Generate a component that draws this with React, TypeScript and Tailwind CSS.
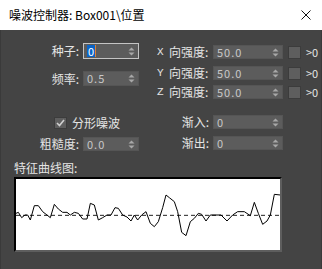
import React from "react";

const font = { fontFamily: '"Noto Sans CJK SC", "Liberation Sans", sans-serif' };

// curve points, in a 3x grid of the graph box
const curve =
  "45,175 52,172 62,188 72,180 80,180 88,195 100,152 112,152 125,170 148,188 160,148 172,162 185,172 198,172 208,180 220,172 232,175 245,192 258,192 268,145 280,150 292,195 305,188 318,180 330,180 342,158 352,160 365,180 378,186 390,198 400,180 410,195 422,180 435,170 448,205 460,215 472,200 485,158 495,120 505,128 520,140 530,170 542,232 555,242 568,200 580,190 592,175 602,178 615,198 628,180 660,180 678,198 695,180 710,170 730,170 748,182 760,142 772,175 785,208 798,198 808,180 820,118 838,120";

const Spinner = () => (
  <svg width="7" height="9" viewBox="0 0 7 9" className="shrink-0">
    <path d="M3.5 0.5 L6.5 3.5 L0.5 3.5 Z" fill="#a8a8a8" />
    <path d="M3.5 8.5 L6.5 5.5 L0.5 5.5 Z" fill="#a8a8a8" />
  </svg>
);

const SpinBox = ({
  value,
  w,
  h,
  focused,
}: {
  value: string;
  w: string;
  h: string;
  focused?: boolean;
}) => (
  <div
    className={`${w} ${h} shrink-0 flex items-center justify-between pl-[3px] pr-[3px] bg-[#5c5c5c] border ${
      focused ? "border-[#c4c4c4]" : "border-[#555555]"
    }`}
  >
    {focused ? (
      <span className="flex items-center h-[12px]">
        <span className="bg-[#0a64c8] text-white text-[11px] leading-[12px] px-[1px]">
          {value}
        </span>
        <span className="w-[1px] h-[12px] bg-[#e08030]" />
      </span>
    ) : (
      <span className="text-[11px] leading-none text-[#c8c8c8] tracking-[1px]">{value}</span>
    )}
    <Spinner />
  </div>
);

const Label = ({ children, w }: { children: React.ReactNode; w: string }) => (
  <span className={`${w} shrink-0 text-right text-[12px] leading-none text-[#e4e4e4] pr-[4px]`}>
    {children}
  </span>
);

const AxisRow = ({ axis, className }: { axis: string; className: string }) => (
  <div className={`flex items-center h-[14px] ${className}`}>
    <span
      className="w-[12px] shrink-0 text-[11px] leading-none text-[#e4e4e4]"
      style={{ fontFamily: '"Liberation Mono", monospace' }}
    >
      {axis}
    </span>
    <span className="w-[44px] shrink-0 text-[12px] leading-none text-[#e4e4e4] whitespace-nowrap">
      向强度:
    </span>
    <SpinBox value="50.0" w="w-[70px]" h="h-[14px]" />
    <span className="ml-[5px] shrink-0 w-[13px] h-[13px] bg-[#5e5e5e] border border-[#3c3c3c]" />
    <span className="ml-[5px] text-[11px] leading-none text-[#e4e4e4] whitespace-nowrap">&gt;0</span>
  </div>
);

export default function App() {
  return (
    <div className="w-[322px] h-[269px] flex flex-col overflow-hidden" style={font}>
      <div className="h-[30px] bg-white flex items-center justify-between pl-[9px] pr-[11px] shrink-0">
        <span className="text-[12px] text-black">噪波控制器: Box001\位置</span>
        <svg width="10" height="10" viewBox="0 0 10 10">
          <path d="M0.5 0.5 L9.5 9.5 M9.5 0.5 L0.5 9.5" stroke="#111" strokeWidth="1" />
        </svg>
      </div>

      <div className="flex-1 bg-[#444444] border-x border-[#3a3a3a] flex flex-col">
        <div className="flex h-[121px]">
          <div className="w-[150px] shrink-0 flex flex-col">
            <div className="flex items-center mt-[13px] h-[16px]">
              <Label w="w-[82px]">种子:</Label>
              <SpinBox value="0" w="w-[56px]" h="h-[16px]" focused />
            </div>
            <div className="flex items-center mt-[12px] h-[15px]">
              <Label w="w-[82px]">频率:</Label>
              <SpinBox value="0.5" w="w-[56px]" h="h-[15px]" />
            </div>
            <div className="flex items-center mt-[30px] h-[13px] pl-[53px]">
              <span className="w-[13px] h-[12px] bg-[#5e5e5e] border border-[#3c3c3c] flex items-center justify-center">
                <svg width="9" height="8" viewBox="0 0 9 8">
                  <path d="M1 4 L3.5 6.5 L8 1" stroke="#d0d0d0" strokeWidth="1.6" fill="none" />
                </svg>
              </span>
              <span className="ml-[5px] text-[12px] leading-none text-[#e4e4e4]">分形噪波</span>
            </div>
            <div className="flex items-center mt-[8px] h-[14px]">
              <Label w="w-[82px]">粗糙度:</Label>
              <SpinBox value="0.0" w="w-[56px]" h="h-[14px]" />
            </div>
          </div>

          <div className="flex flex-col pl-[6px]">
            <AxisRow axis="X" className="mt-[15px]" />
            <AxisRow axis="Y" className="mt-[7px]" />
            <AxisRow axis="Z" className="mt-[5px]" />
            <div className="flex items-center h-[14px] mt-[16px]">
              <Label w="w-[56px]">渐入:</Label>
              <SpinBox value="0" w="w-[70px]" h="h-[14px]" />
            </div>
            <div className="flex items-center h-[14px] mt-[7px]">
              <Label w="w-[56px]">渐出:</Label>
              <SpinBox value="0" w="w-[70px]" h="h-[14px]" />
            </div>
          </div>
        </div>

        <div className="pl-[13px] mt-[11px] text-[12px] leading-none text-[#e4e4e4]">特征曲线图:</div>
        <div className="ml-[13px] mt-[3px] w-[268px] h-[75px] bg-white border-2 border-t-black border-l-black border-b-[#5e5e5e] border-r-[#5e5e5e]">
          <svg width="264" height="71" viewBox="45 72 792 213" preserveAspectRatio="none" className="block">
            <line x1="45" y1="181" x2="837" y2="181" stroke="#222" strokeWidth="3" strokeDasharray="12 9" />
            <polyline points={curve} fill="none" stroke="#000" strokeWidth="3" strokeLinejoin="round" />
          </svg>
        </div>
      </div>
    </div>
  );
}
